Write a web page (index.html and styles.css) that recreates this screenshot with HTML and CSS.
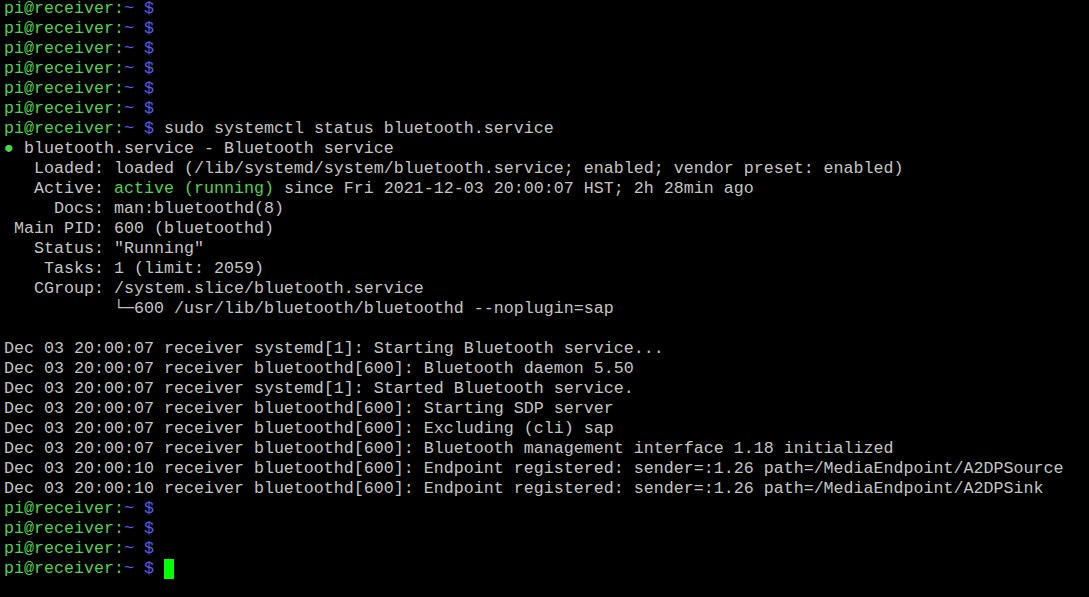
FILE: index.html
```html
<!DOCTYPE html>
<html>
<head>
<meta charset="utf-8">
<link rel="stylesheet" href="styles.css">
</head>
<body>
<pre class="term"><span class="u">pi@receiver:</span><span class="p">~ $</span>
<span class="u">pi@receiver:</span><span class="p">~ $</span>
<span class="u">pi@receiver:</span><span class="p">~ $</span>
<span class="u">pi@receiver:</span><span class="p">~ $</span>
<span class="u">pi@receiver:</span><span class="p">~ $</span>
<span class="u">pi@receiver:</span><span class="p">~ $</span>
<span class="u">pi@receiver:</span><span class="p">~ $</span> sudo systemctl status bluetooth.service
<span class="g">●</span> bluetooth.service - Bluetooth service
   Loaded: loaded (/lib/systemd/system/bluetooth.service; enabled; vendor preset: enabled)
   Active: <span class="g">active (running)</span> since Fri 2021-12-03 20:00:07 HST; 2h 28min ago
     Docs: man:bluetoothd(8)
 Main PID: 600 (bluetoothd)
   Status: "Running"
    Tasks: 1 (limit: 2059)
   CGroup: /system.slice/bluetooth.service
           └─600 /usr/lib/bluetooth/bluetoothd --noplugin=sap

Dec 03 20:00:07 receiver systemd[1]: Starting Bluetooth service...
Dec 03 20:00:07 receiver bluetoothd[600]: Bluetooth daemon 5.50
Dec 03 20:00:07 receiver systemd[1]: Started Bluetooth service.
Dec 03 20:00:07 receiver bluetoothd[600]: Starting SDP server
Dec 03 20:00:07 receiver bluetoothd[600]: Excluding (cli) sap
Dec 03 20:00:07 receiver bluetoothd[600]: Bluetooth management interface 1.18 initialized
Dec 03 20:00:10 receiver bluetoothd[600]: Endpoint registered: sender=:1.26 path=/MediaEndpoint/A2DPSource
Dec 03 20:00:10 receiver bluetoothd[600]: Endpoint registered: sender=:1.26 path=/MediaEndpoint/A2DPSink
<span class="u">pi@receiver:</span><span class="p">~ $</span>
<span class="u">pi@receiver:</span><span class="p">~ $</span>
<span class="u">pi@receiver:</span><span class="p">~ $</span>
<span class="u">pi@receiver:</span><span class="p">~ $</span> <span class="cursor"> </span></pre>
</body>
</html>
```
FILE: styles.css
```css
html, body {
  margin: 0;
  padding: 0;
  background: #000;
  height: 100%;
  overflow: hidden;
}
.term {
  margin: -1px 0 0 0;
  padding: 0 0 0 4px;
  font-family: "Liberation Mono", "Courier New", monospace;
  font-size: 16.667px;
  line-height: 20px;
  color: #c4c4c4;
  white-space: pre;
}
.u { color: #4fd24f; }
.p { color: #5a5aee; }
.g { color: #4fd24f; }
.cursor {
  display: inline-block;
  width: 10px;
  height: 20px;
  background: #00ff00;
  vertical-align: top;
}
```
